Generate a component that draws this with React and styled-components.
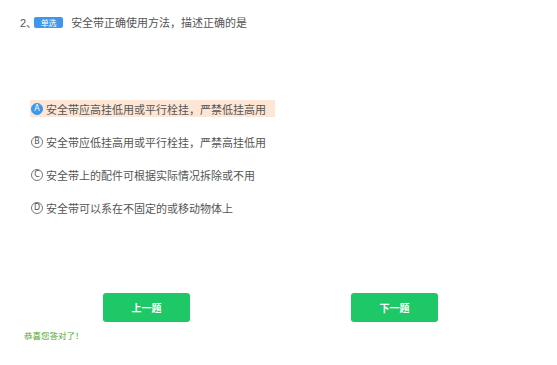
import styled, { createGlobalStyle } from "styled-components";

const GlobalStyle = createGlobalStyle`
  body {
    margin: 0;
    background: #fff;
    font-family: "Liberation Sans", "Noto Sans CJK SC", sans-serif;
  }
`;

export const Page = styled.div`
  width: 557px;
  height: 365px;
  box-sizing: border-box;
  padding-top: 14px;
  display: flex;
  flex-direction: column;
`;

export const TitleRow = styled.div`
  display: flex;
  align-items: center;
  height: 16px;
  padding-left: 20px;
  font-size: 11px;
  color: #555;
`;

export const Num = styled.span`
  margin-right: -3px;
`;

export const Badge = styled.span`
  display: inline-flex;
  align-items: center;
  justify-content: center;
  width: 29px;
  height: 11px;
  border-radius: 2px;
  background: #3f97ea;
  color: #fff;
  font-size: 8px;
  margin-right: 8px;
`;

export const Options = styled.div`
  display: flex;
  flex-direction: column;
  gap: 16px;
  margin-top: 70px;
  padding-left: 30px;
`;

export const Option = styled.div`
  display: flex;
  align-items: center;
  width: 245px;
  height: 17px;
  padding-left: 1px;
  box-sizing: border-box;
  font-size: 11px;
  color: #555;
  background: ${(p) => (p.$active ? "#fde6d5" : "transparent")};
`;

export const Mark = styled.span`
  display: inline-flex;
  align-items: center;
  justify-content: center;
  width: 12px;
  height: 12px;
  box-sizing: border-box;
  border-radius: 50%;
  margin-right: 3px;
  padding-top: 1px;
  line-height: 1;
  font-size: 8px;
  font-family: "DejaVu Sans", sans-serif;
  color: ${(p) => (p.$active ? "#fff" : "#555")};
  background: ${(p) => (p.$active ? "#3b98ef" : "#fff")};
  border: 1px solid ${(p) => (p.$active ? "#3b98ef" : "#777")};
`;

export const Footer = styled.div`
  display: flex;
  margin-top: 77px;
  padding-left: 103px;
  gap: 161px;
`;

export const NavButton = styled.button`
  width: 87px;
  height: 29px;
  border: none;
  border-radius: 3px;
  background: #1fc866;
  color: #fff;
  font-size: 10px;
  font-weight: bold;
  font-family: "Liberation Sans", "Noto Sans CJK SC", sans-serif;
  cursor: pointer;
`;

export const Message = styled.div`
  margin-top: 7px;
  padding-left: 24px;
  font-size: 8.5px;
  color: #4fa82e;
`;

const options = [
  { key: "A", text: "安全带应高挂低用或平行栓挂，严禁低挂高用", active: true },
  { key: "B", text: "安全带应低挂高用或平行栓挂，严禁高挂低用" },
  { key: "C", text: "安全带上的配件可根据实际情况拆除或不用" },
  { key: "D", text: "安全带可以系在不固定的或移动物体上" },
];

function App() {
  return (
    <Page>
      <GlobalStyle />
      <TitleRow>
        <Num>2、</Num>
        <Badge>单选</Badge>
        安全带正确使用方法，描述正确的是
      </TitleRow>
      <Options>
        {options.map((o) => (
          <Option key={o.key} $active={o.active}>
            <Mark $active={o.active}>{o.key}</Mark>
            {o.text}
          </Option>
        ))}
      </Options>
      <Footer>
        <NavButton>上一题</NavButton>
        <NavButton>下一题</NavButton>
      </Footer>
      <Message>恭喜您答对了！</Message>
    </Page>
  );
}

export default App;
